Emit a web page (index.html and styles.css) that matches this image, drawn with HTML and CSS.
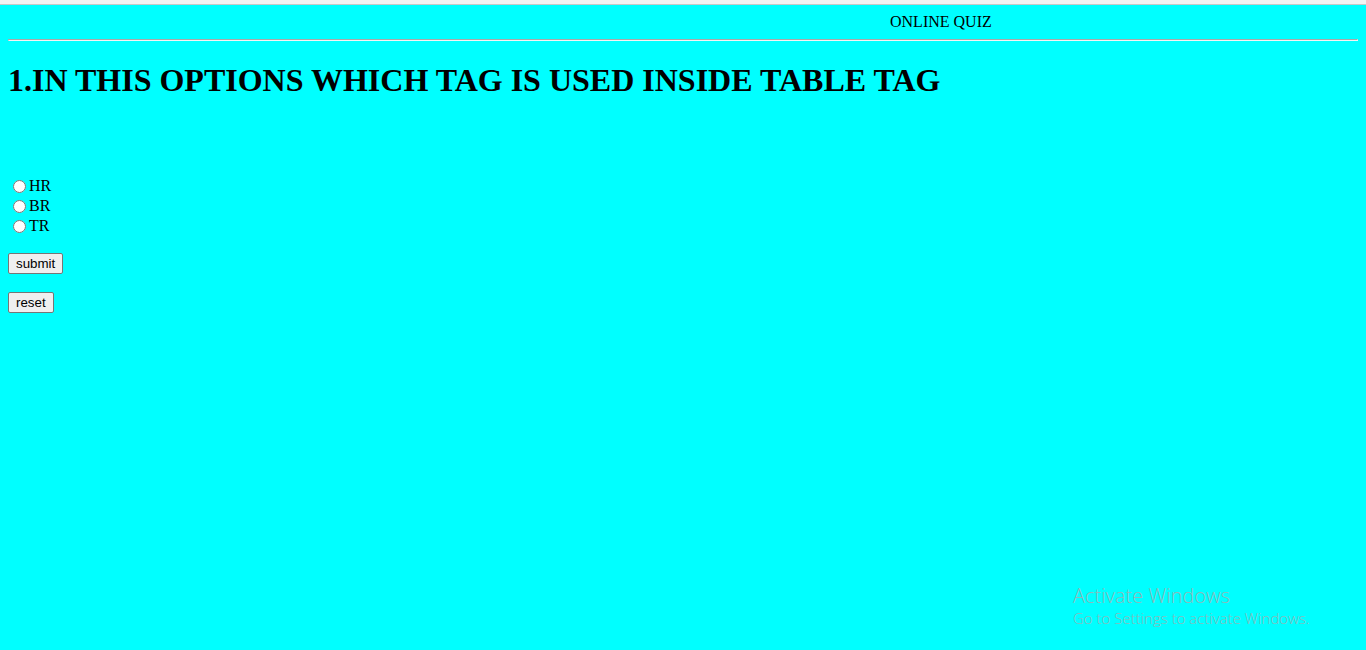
FILE: index.html
```html
<!DOCTYPE html>
<html>
<head>
<meta charset="utf-8">
<title>Online Quiz</title>
<link rel="stylesheet" href="styles.css">
</head>
<body>
<div class="chrome"></div>
<main class="page">
  <div class="marquee"><span class="marquee-text">ONLINE QUIZ</span></div>
  <hr class="rule">
  <h1 class="question">1.IN THIS OPTIONS WHICH TAG IS USED INSIDE TABLE TAG</h1>
  <form class="quiz">
    <div class="options">
      <label class="option"><input type="radio" name="q1" value="hr">HR</label>
      <label class="option"><input type="radio" name="q1" value="br">BR</label>
      <label class="option"><input type="radio" name="q1" value="tr">TR</label>
    </div>
    <div class="actions">
      <button type="button" class="btn">submit</button>
      <button type="reset" class="btn">reset</button>
    </div>
  </form>
</main>
<div class="watermark">
  <div class="wm-title">Activate Windows</div>
  <div class="wm-sub">Go to Settings to activate Windows.</div>
</div>
</body>
</html>
```
FILE: styles.css
```css
html, body {
  margin: 0;
  padding: 0;
  height: 100%;
}
body {
  background: #00ffff;
  font-family: "Liberation Serif", "Times New Roman", serif;
  font-size: 16px;
  color: #000;
  overflow: hidden;
}
.chrome {
  height: 4px;
  background: #f3f3f3;
  border-bottom: 1px solid #c8c8c8;
}
.page {
  padding: 8px;
}
.marquee {
  height: 18px;
  line-height: 18px;
  overflow: hidden;
  white-space: nowrap;
}
.marquee-text {
  display: inline-block;
  margin-left: 882px;
}
.rule {
  margin: 8px 0 0 0;
  border: 1px solid #f4f4f4;
  border-top-color: #a8a8a8;
  border-left-color: #a8a8a8;
  height: 0;
}
.question {
  font-size: 32px;
  font-weight: bold;
  margin: 21px 0 0 0;
  line-height: 37px;
}
.quiz {
  margin-top: 77px;
}
.options {
  display: flex;
  flex-direction: column;
}
.option {
  display: flex;
  align-items: center;
  height: 20px;
  line-height: 20px;
}
.option input {
  width: 13px;
  height: 13px;
  margin: 0 3px 0 5px;
}
.actions {
  display: flex;
  flex-direction: column;
  align-items: flex-start;
  gap: 18px;
  margin-top: 17px;
}
.btn {
  font-family: "Liberation Sans", Arial, sans-serif;
  font-size: 13.33px;
  height: 21px;
  padding: 1px 7px;
  background: #efefef;
  border: 1px solid #767676;
  border-radius: 2px;
  color: #000;
}
.watermark {
  position: absolute;
  left: 1073px;
  top: 583px;
  color: #8fb9b9;
  font-family: "Open Sans", "Noto Sans", sans-serif;
}
.wm-title {
  font-size: 20px;
  line-height: 26px;
  font-weight: 300;
}
.wm-sub {
  font-size: 15px;
  line-height: 19px;
  font-weight: 300;
}
```
